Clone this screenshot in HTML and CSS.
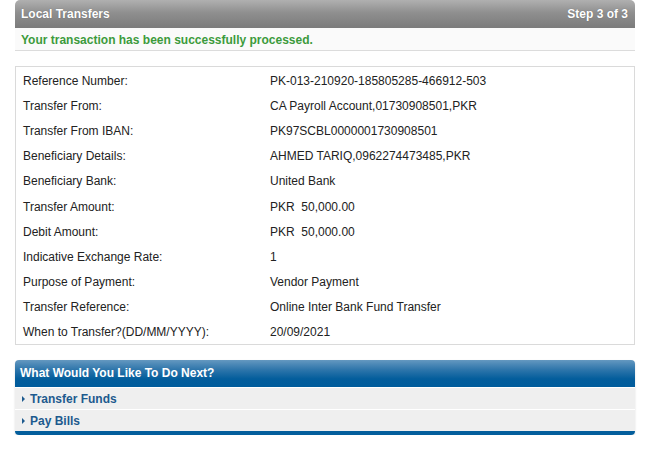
FILE: index.html
```html
<!DOCTYPE html>
<html>
<head>
<meta charset="utf-8">
<link rel="stylesheet" href="styles.css">
</head>
<body>
<div class="page">
  <div class="panel-head">
    <span class="title">Local Transfers</span>
    <span class="step">Step 3 of 3</span>
  </div>
  <div class="success">Your transaction has been successfully processed.</div>

  <div class="details">
    <div class="row"><span class="label">Reference Number:</span><span class="value">PK-013-210920-185805285-466912-503</span></div>
    <div class="row"><span class="label">Transfer From:</span><span class="value">CA Payroll Account,01730908501,PKR</span></div>
    <div class="row"><span class="label">Transfer From IBAN:</span><span class="value">PK97SCBL0000001730908501</span></div>
    <div class="row"><span class="label">Beneficiary Details:</span><span class="value">AHMED TARIQ,0962274473485,PKR</span></div>
    <div class="row"><span class="label">Beneficiary Bank:</span><span class="value">United Bank</span></div>
    <div class="row"><span class="label">Transfer Amount:</span><span class="value">PKR&nbsp;&nbsp;50,000.00</span></div>
    <div class="row"><span class="label">Debit Amount:</span><span class="value">PKR&nbsp;&nbsp;50,000.00</span></div>
    <div class="row"><span class="label">Indicative Exchange Rate:</span><span class="value">1</span></div>
    <div class="row"><span class="label">Purpose of Payment:</span><span class="value">Vendor Payment</span></div>
    <div class="row"><span class="label">Transfer Reference:</span><span class="value">Online Inter Bank Fund Transfer</span></div>
    <div class="row"><span class="label">When to Transfer?(DD/MM/YYYY):</span><span class="value">20/09/2021</span></div>
  </div>

  <div class="next">
    <div class="next-head">What Would You Like To Do Next?</div>
    <div class="next-item"><span class="arrow"></span>Transfer Funds</div>
    <div class="next-item"><span class="arrow"></span>Pay Bills</div>
    <div class="next-foot"></div>
  </div>
</div>
</body>
</html>
```

FILE: styles.css
```css
html, body {
  margin: 0;
  padding: 0;
  background: #ffffff;
}

body {
  font-family: "Liberation Sans", Arial, sans-serif;
  font-size: 12px;
  color: #222222;
}

.page {
  width: 620px;
  margin: 0 0 0 15px;
}

.panel-head {
  height: 28px;
  display: flex;
  align-items: center;
  justify-content: space-between;
  padding: 0 7px 0 6px;
  border-radius: 5px 5px 0 0;
  background: linear-gradient(to bottom, #b0b0b0 0%, #8f8f8f 45%, #7b7b7b 100%);
  color: #ffffff;
  font-weight: bold;
  font-size: 12px;
  text-shadow: 0 0 1px rgba(0,0,0,0.3);
}

.success {
  height: 22px;
  line-height: 24px;
  padding-left: 6px;
  background: #fafafa;
  border-bottom: 1px solid #dcdcdc;
  color: #3c9a3c;
  font-weight: bold;
}

.details {
  margin-top: 15px;
  border: 1px solid #dadada;
  padding: 0;
  display: grid;
  grid-auto-rows: 25.2px;
}

.row {
  display: grid;
  grid-template-columns: 247px 1fr;
  align-items: center;
  padding-left: 7px;
  padding-top: 2px;
}

.value {
  color: #222222;
}

.next {
  margin-top: 15px;
  border-radius: 4px;
  overflow: hidden;
  box-shadow: 0 1px 2px rgba(0,0,0,0.15);
}

.next-head {
  height: 27px;
  line-height: 27px;
  padding-left: 5px;
  background: linear-gradient(to bottom, #6498c0 0%, #2f76ab 35%, #035d9c 70%, #005c9c 100%);
  color: #ffffff;
  font-weight: bold;
  font-size: 12px;
}

.next-item {
  height: 21px;
  display: flex;
  align-items: center;
  background: #efefef;
  border-top: 1px solid #ffffff;
  padding-left: 7px;
  color: #1d5a8e;
  font-weight: bold;
}

.arrow {
  width: 0;
  height: 0;
  border-top: 3px solid transparent;
  border-bottom: 3px solid transparent;
  border-left: 3px solid #1d5a8e;
  margin-right: 5px;
  margin-top: 1px;
}

.next-foot {
  height: 4px;
  background: #035e9c;
}
```
